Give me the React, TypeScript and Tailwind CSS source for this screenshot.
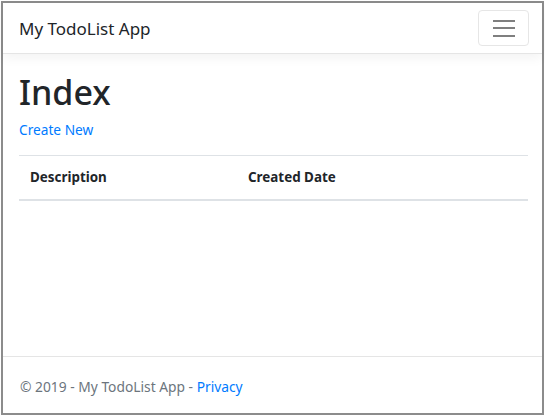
export default function App() {
  const font = { fontFamily: '"Noto Sans", "Open Sans", sans-serif' };
  return (
    <div className="w-[545px] h-[416px] bg-white p-[1px]" style={font}>
      <div className="h-full border-2 border-[#8c8c8c] flex flex-col bg-white text-[#212529]">
        <nav className="h-[51px] shrink-0 flex items-center justify-between pl-[16px] pr-[13px] border-b border-[#e5e5e5] shadow-[0_4px_11px_rgba(0,0,0,0.05)] relative z-10">
          <span className="text-[17px] leading-none">My TodoList App</span>
          <button className="w-[51px] h-[36px] border border-[#e6e6e6] rounded-[4px] flex flex-col items-center justify-center gap-[5.5px]">
            <span className="block w-[22px] h-[2px] bg-[#7f7f7f]"></span>
            <span className="block w-[22px] h-[2px] bg-[#7f7f7f]"></span>
            <span className="block w-[22px] h-[2px] bg-[#7f7f7f]"></span>
          </button>
        </nav>
        <main className="pl-[16px] pr-[14px] pt-[17px]">
          <h1 className="text-[34px] leading-[42px] font-medium mb-[6px]">Index</h1>
          <p className="text-[13.7px] leading-[21.6px] mb-[14px]">
            <a className="text-[#007bff]">Create New</a>
          </p>
          <table className="w-full border-collapse text-[13.4px]">
            <thead>
              <tr className="border-t border-[#dee2e6] border-b-2">
                <th className="text-left font-bold px-[11px] py-[11px] leading-[21.6px] w-[218px]">Description</th>
                <th className="text-left font-bold px-[11px] py-[11px] leading-[21.6px]">Created Date</th>
              </tr>
            </thead>
          </table>
        </main>
        <footer className="mt-auto border-t border-[#e5e5e5] h-[57px] flex items-center pl-[17px] pt-[5px] text-[13.8px] text-[#6c757d]">
          <span>© 2019 - My TodoList App - <a className="text-[#007bff]">Privacy</a></span>
        </footer>
      </div>
    </div>
  );
}
